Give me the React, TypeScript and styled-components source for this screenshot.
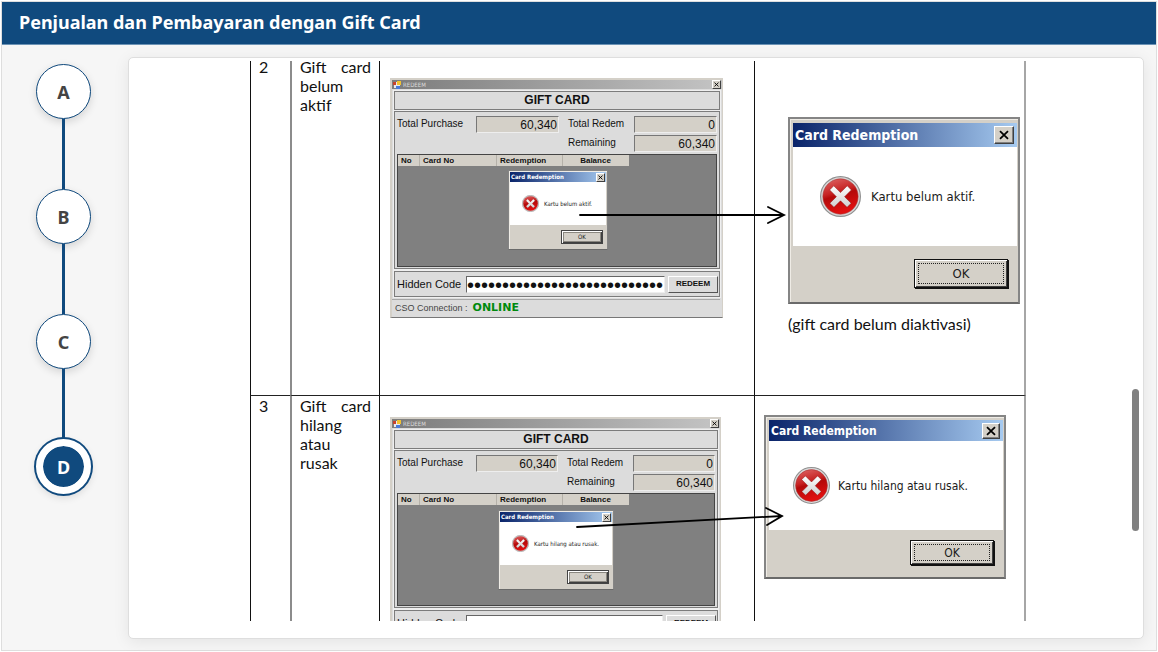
import React from "react";
import styled, { createGlobalStyle } from "styled-components";

const navy = "#104a7e";
const face = "#d4d0c8";
const uiFont = `"Liberation Sans", Arial, sans-serif`;
const dialogFont = `"DejaVu Sans Condensed", "DejaVu Sans", sans-serif`;

const GlobalStyle = createGlobalStyle`
  *, *::before, *::after { box-sizing: border-box; }
  body { margin: 0; background: #fff; font-family: "Noto Sans", "Open Sans", sans-serif; }
  button, input { font: inherit; color: inherit; margin: 0; }
`;

const Screen = styled.div`
  height: 100vh;
  padding: 1px;
  display: flex;
`;

const Frame = styled.div`
  flex: 1;
  min-width: 0;
  display: flex;
  flex-direction: column;
  border: 1px solid #dedede;
  background: #f6f6f6;
`;

const Header = styled.header`
  flex: none;
  height: 43px;
  padding: 0 17px 2px;
  display: flex;
  align-items: center;
  background: ${navy};
  border-bottom: 1px solid #6c93b5;
`;

const Title = styled.h1`
  margin: 0;
  font-size: 18px;
  line-height: 24px;
  font-weight: 700;
  color: #fff;
`;

const Body = styled.div`
  flex: 1;
  min-height: 0;
  display: flex;
  padding: 12px 12px 11px 34px;
`;

const Steps = styled.nav`
  flex: none;
  width: 92px;
  padding-top: 7px;
  display: flex;
  flex-direction: column;
  align-items: flex-start;
`;

const Step = styled.button<{ $active?: boolean }>`
  width: 55px;
  height: 55px;
  padding: 0;
  border-radius: 50%;
  border: ${(p) => (p.$active ? "7px solid #fff" : `1px solid ${navy}`)};
  background: ${(p) => (p.$active ? navy : "#fff")};
  background-clip: padding-box;
  color: ${(p) => (p.$active ? "#fff" : "#444")};
  font-size: 18px;
  line-height: 24px;
  font-weight: 700;
  box-shadow: ${(p) => (p.$active ? `0 0 0 2px ${navy}, ` : "")}0 3px 8px rgba(0, 0, 0, 0.14);
`;

const Connector = styled.span`
  width: 3px;
  height: 70px;
  margin-left: 26px;
  background: ${navy};
`;

const Panel = styled.main`
  flex: 1;
  min-width: 0;
  position: relative;
  padding: 3px 0 17px;
  display: flex;
  background: #fff;
  border: 1px solid #dedede;
  border-radius: 5px;
  box-shadow: 0 3px 16px rgba(0, 0, 0, 0.08);
`;

const Viewport = styled.div`
  flex: 1;
  min-width: 0;
  overflow: hidden;
  padding-left: 4px;
`;

const Thumb = styled.div`
  position: absolute;
  right: 4px;
  top: 57%;
  width: 7px;
  height: 142px;
  border-radius: 4px;
  background: #808080;
`;

const Sheet = styled.table`
  width: 776px;
  max-width: 100%;
  margin: -4px auto 0;
  table-layout: fixed;
  border-spacing: 0;
  color: #111;
  font-family: Lato, sans-serif;
  font-size: 16px;
  line-height: 19px;
`;

const SheetRow = styled.tr<{ $ruled?: boolean }>`
  height: 338px;
  & > td {
    border-top: ${(p) => (p.$ruled ? "1px solid #222" : "0")};
  }
`;

const Cell = styled.td<{ $pad: string; $soft?: boolean }>`
  position: relative;
  vertical-align: top;
  padding: ${(p) => p.$pad};
  border-left: ${(p) => (p.$soft ? "2px solid #8c8c8c" : "1px solid #111")};
  text-align: justify;
  &:last-child {
    border-right: 2px solid #a6a6a6;
    text-align: left;
  }
`;

const Arrow = styled.svg<{ $top: number }>`
  position: absolute;
  z-index: 2;
  left: 190px;
  top: ${(p) => p.$top}px;
  overflow: visible;
  fill: none;
  stroke: #000;
  stroke-width: 1.8;
  stroke-linecap: round;
`;

const Caption = styled.p`
  margin: 10px 0 0;
  white-space: nowrap;
`;

/* Message box, drawn at several sizes */
interface Metrics {
  width: number;
  edge: number;
  inset: number;
  title: number;
  body: number;
  foot: number;
  titleFont: number;
  font: number;
  icon: number;
  iconLeft: number;
  gap: number;
  close: number;
  button: [number, number];
  buttonRight: number;
}

const Box = styled.section<{ $m: Metrics }>`
  width: ${(p) => p.$m.width}px;
  padding: ${(p) => p.$m.inset}px 1px 0 ${(p) => (p.$m.edge > 1 ? 3 : 1)}px;
  border: ${(p) => p.$m.edge}px solid #858585;
  border-bottom-color: #6a6a6a;
  background: ${face};
  box-shadow: inset 1px 1px 0 #efece6;
  color: #1a1a1a;
  font-family: ${dialogFont};
  font-size: ${(p) => p.$m.font}px;
  line-height: 1;
`;

const BoxTitle = styled.header<{ $m: Metrics }>`
  height: ${(p) => p.$m.title}px;
  padding: 0 ${(p) => (p.$m.edge > 1 ? 3 : 1)}px 0 ${(p) => (p.$m.edge > 1 ? 2 : 1)}px;
  display: flex;
  align-items: center;
  justify-content: space-between;
  background: linear-gradient(90deg, #0a246a, #a6caf0);
  color: #fff;
  font-size: ${(p) => p.$m.titleFont}px;
  font-weight: 700;
  white-space: nowrap;
`;

const CloseButton = styled.button<{ $size: number }>`
  width: ${(p) => p.$size}px;
  height: ${(p) => p.$size - (p.$size > 10 ? 2 : 0)}px;
  padding: 0;
  display: grid;
  place-items: center;
  background: ${face};
  border: 1px solid;
  border-color: #fff #404040 #404040 #fff;
  box-shadow: ${(p) => (p.$size > 10 ? "inset -1px -1px 0 #808080" : "none")};
`;

const BoxBody = styled.div<{ $m: Metrics }>`
  height: ${(p) => p.$m.body}px;
  padding-left: ${(p) => p.$m.iconLeft}px;
  display: flex;
  align-items: center;
  gap: ${(p) => p.$m.gap}px;
  background: #fff;
  white-space: nowrap;
`;

const BoxFoot = styled.footer<{ $m: Metrics }>`
  height: ${(p) => p.$m.foot}px;
  padding-right: ${(p) => p.$m.buttonRight}px;
  padding-bottom: ${(p) => (p.$m.edge > 1 ? 2 : 1)}px;
  display: flex;
  align-items: center;
  justify-content: flex-end;
`;

const OkButton = styled.button<{ $m: Metrics }>`
  width: ${(p) => p.$m.button[0]}px;
  height: ${(p) => p.$m.button[1]}px;
  padding: ${(p) => (p.$m.edge > 1 ? 2 : 0)}px;
  display: grid;
  background: ${face};
  border: 1px solid ${(p) => (p.$m.edge > 1 ? "#111" : "#444")};
  box-shadow: inset 1px 1px 0 #fff, inset -1px -1px 0 #404040,
    ${(p) => (p.$m.edge > 1 ? "1px 1px 0 #111" : "0 0 0 #111")};
`;

const FocusRing = styled.span<{ $dotted: boolean }>`
  display: grid;
  place-items: center;
  margin: 1px;
  border: 1px ${(p) => (p.$dotted ? "dotted #222" : "solid #8a8780")};
`;

function Cross({ size }: { size: number }) {
  return (
    <svg width={size} height={size} viewBox="0 0 10 10" aria-hidden="true">
      <path d="M1 1.2 9 8.8M9 1.2 1 8.8" stroke="#000" strokeWidth="1.8" fill="none" />
    </svg>
  );
}

function ErrorIcon({ size }: { size: number }) {
  return (
    <svg width={size} height={size} viewBox="0 0 40 40" aria-hidden="true">
      <defs>
        <linearGradient id="errorRed" x1="0" y1="0" x2="0.3" y2="1">
          <stop offset="0" stopColor="#e06a6a" />
          <stop offset="0.45" stopColor="#c62222" />
          <stop offset="0.55" stopColor="#b40a0a" />
          <stop offset="1" stopColor="#e01010" />
        </linearGradient>
        <linearGradient id="crossGrey" x1="0" y1="0" x2="0" y2="1">
          <stop offset="0" stopColor="#fff" />
          <stop offset="1" stopColor="#cfcfcf" />
        </linearGradient>
      </defs>
      <circle cx="20" cy="20" r="19.4" fill="#d9d9d9" stroke="#909090" strokeWidth="1.2" />
      <circle cx="20" cy="20" r="17.2" fill="url(#errorRed)" stroke="#a33" strokeWidth="0.6" />
      <path
        d="M13.4 9.6 20 16.2l6.6-6.6 4 4L24 20.2l6.4 6.4-4 4L20 24.2l-6.4 6.4-4-4 6.4-6.4-6.6-6.6z"
        fill="url(#crossGrey)"
        stroke="#8e1414"
        strokeWidth="0.5"
      />
    </svg>
  );
}

function MessageBox({ m, text }: { m: Metrics; text: string }) {
  const large = m.edge > 1;
  return (
    <Box $m={m} aria-label="Card Redemption">
      <BoxTitle $m={m}>
        Card Redemption
        <CloseButton type="button" aria-label="Close" $size={m.close}>
          <Cross size={large ? 10 : 5} />
        </CloseButton>
      </BoxTitle>
      <BoxBody $m={m}>
        <ErrorIcon size={m.icon} />
        {text}
      </BoxBody>
      <BoxFoot $m={m}>
        <OkButton type="button" $m={m}>
          <FocusRing $dotted={large}>OK</FocusRing>
        </OkButton>
      </BoxFoot>
    </Box>
  );
}

const inactiveLarge: Metrics = {
  width: 232, edge: 2, inset: 4, title: 24, body: 99, foot: 56, titleFont: 14, font: 13,
  icon: 41, iconLeft: 27, gap: 10, close: 20, button: [94, 29], buttonRight: 9,
};
const lostLarge: Metrics = {
  width: 242, edge: 2, inset: 3, title: 21, body: 89, foot: 47, titleFont: 12, font: 12,
  icon: 37, iconLeft: 24, gap: 8, close: 18, button: [84, 25], buttonRight: 9,
};
const inactiveSmall: Metrics = {
  width: 100, edge: 1, inset: 1, title: 10, body: 43, foot: 24, titleFont: 6, font: 6,
  icon: 17, iconLeft: 12, gap: 5, close: 9, button: [42, 14], buttonRight: 3,
};
const lostSmall: Metrics = { ...inactiveSmall, width: 116 };

/* Redeem window */
const Window = styled.figure<{ $width: number }>`
  position: relative;
  width: ${(p) => p.$width}px;
  height: 240px;
  margin: 0;
  padding: 0 2px;
  border: 2px solid ${face};
  border-right-width: 1px;
  border-bottom: 1px solid #777;
  display: flex;
  flex-direction: column;
  gap: 2px;
  background: #dcdcdc;
  color: #111;
  font-family: ${uiFont};
  font-size: 10px;
  line-height: 12px;
`;

const WindowTitle = styled.figcaption`
  height: 9px;
  margin: 0 -2px;
  padding: 0 1px;
  display: flex;
  align-items: center;
  gap: 2px;
  background: linear-gradient(90deg, #7c7c7c, #c4c4c4);
  color: #dcdcdc;
  font-family: ${dialogFont};
  font-size: 6px;
  line-height: 8px;
  & > button {
    margin-left: auto;
  }
`;

const Group = styled.div`
  border: 1px solid #7c7c7c;
  box-shadow: 0 0 0 1px #efefef;
`;

const Heading = styled(Group)`
  height: 19px;
  display: grid;
  place-items: center;
  font-size: 12px;
  font-weight: 700;
`;

const Totals = styled(Group)`
  height: 159px;
  margin-top: -1px;
  padding: 4px 2px 0;
`;

const Fields = styled.div`
  display: grid;
  grid-template-columns: 79fr 83fr 75fr 83fr;
  grid-auto-rows: 17px;
  row-gap: 2px;
  align-items: center;
`;

const FieldLabel = styled.label<{ $second?: boolean; $third?: boolean }>`
  grid-column: ${(p) => (p.$third ? 3 : "auto")};
  padding-left: ${(p) => (p.$second ? 9 : 0)}px;
  white-space: nowrap;
`;

const Amount = styled.input`
  width: 100%;
  min-width: 0;
  height: 17px;
  padding: 1px 1px 0;
  border: 1px solid;
  border-color: #777 #eee #eee #777;
  border-radius: 0;
  background: ${face};
  font-size: 12px;
  line-height: 14px;
  text-align: right;
`;

const GridArea = styled.div`
  height: 113px;
  margin-top: 2px;
  border: 1px solid #444;
  background: #808080;
`;

const CardGrid = styled.table`
  width: 231px;
  table-layout: fixed;
  border-spacing: 0;
  background: ${face};
  font-size: 8px;
  line-height: 10px;
  th {
    height: 11px;
    padding: 1px 4px 0 3px;
    text-align: left;
    border-right: 1px solid #b5b1a9;
  }
  th:last-child {
    text-align: center;
    border-right: 0;
  }
`;

const CodeRow = styled(Group)`
  height: 26px;
  padding: 0 1px 0 2px;
  display: flex;
  align-items: center;
`;

const CodeLabel = styled.label`
  flex: none;
  width: 69px;
  font-size: 11px;
`;

const CodeInput = styled.input`
  flex: 1;
  min-width: 0;
  height: 17px;
  padding: 2px 0 0;
  border: 1px solid;
  border-color: #666 #eee #eee #666;
  border-radius: 0;
  background: #fff;
  font-family: ${uiFont};
  font-size: 20px;
  line-height: 14px;
`;

const RedeemButton = styled.button`
  flex: none;
  width: 50px;
  height: 17px;
  margin-left: 3px;
  padding: 0;
  border: 1px solid;
  border-color: #fff #555 #555 #fff;
  background: #dcdcdc;
  font-size: 8px;
  line-height: 10px;
  font-weight: 700;
`;

const Status = styled.div`
  height: 18px;
  margin-left: -2px;
  padding: 0 0 2px 3px;
  display: flex;
  align-items: center;
  border-top: 1px solid #a8a8a8;
  color: #444;
  font-size: 9px;
  & > strong {
    margin-left: 5px;
    color: #008a0e;
    font-family: "DejaVu Sans", sans-serif;
    font-size: 11px;
  }
`;

const Popup = styled.div<{ $left: number; $top: number }>`
  position: absolute;
  left: ${(p) => p.$left}px;
  top: ${(p) => p.$top}px;
`;

function FormIcon() {
  return (
    <svg width="8" height="8" viewBox="0 0 8 8" aria-hidden="true">
      <rect x="1" y="1" width="6" height="6" fill="#e9e9ee" />
      <rect x="0" y="1" width="3" height="3" fill="#c8422c" />
      <rect x="4" y="0" width="4" height="4" fill="#f2c230" />
      <rect x="3" y="5" width="4" height="3" fill="#4a7bd8" />
    </svg>
  );
}

interface RedeemWindowProps {
  id: string;
  width: number;
  popupLeft: number;
  popupTop: number;
  m: Metrics;
  text: string;
}

function RedeemWindow({ id, width, popupLeft, popupTop, m, text }: RedeemWindowProps) {
  return (
    <Window $width={width}>
      <WindowTitle>
        <FormIcon />
        REDEEM
        <CloseButton type="button" aria-label="Close" $size={9}>
          <Cross size={5} />
        </CloseButton>
      </WindowTitle>
      <Heading>GIFT CARD</Heading>
      <Totals>
        <Fields>
          <FieldLabel htmlFor={`${id}-purchase`}>Total Purchase</FieldLabel>
          <Amount id={`${id}-purchase`} value="60,340" readOnly />
          <FieldLabel $second htmlFor={`${id}-redeem`}>Total Redem</FieldLabel>
          <Amount id={`${id}-redeem`} value="0" readOnly />
          <FieldLabel $second $third htmlFor={`${id}-remaining`}>Remaining</FieldLabel>
          <Amount id={`${id}-remaining`} value="60,340" readOnly />
        </Fields>
        <GridArea>
          <CardGrid>
            <colgroup>
              <col width="22" />
              <col width="77" />
              <col width="66" />
              <col width="66" />
            </colgroup>
            <thead>
              <tr>
                <th>No</th>
                <th>Card No</th>
                <th>Redemption</th>
                <th>Balance</th>
              </tr>
            </thead>
          </CardGrid>
        </GridArea>
      </Totals>
      <CodeRow>
        <CodeLabel htmlFor={`${id}-code`}>Hidden Code</CodeLabel>
        <CodeInput id={`${id}-code`} type="password" value={"0".repeat(28)} readOnly />
        <RedeemButton type="button">REDEEM</RedeemButton>
      </CodeRow>
      <Status>
        CSO Connection :<strong>ONLINE</strong>
      </Status>
      <Popup $left={popupLeft} $top={popupTop}>
        <MessageBox m={m} text={text} />
      </Popup>
    </Window>
  );
}

const steps = ["A", "B", "C", "D"];

export default function App() {
  return (
    <Screen>
      <GlobalStyle />
      <Frame>
        <Header>
          <Title>Penjualan dan Pembayaran dengan Gift Card</Title>
        </Header>
        <Body>
          <Steps>
            {steps.map((s, i) => (
              <React.Fragment key={s}>
                {i > 0 && <Connector />}
                <Step type="button" $active={s === "D"}>{s}</Step>
              </React.Fragment>
            ))}
          </Steps>
          <Panel>
            <Viewport>
              <Sheet>
                <colgroup>
                  <col width="40" />
                  <col width="89" />
                  <col width="375" />
                  <col width="272" />
                </colgroup>
                <tbody>
                  <SheetRow>
                    <Cell $pad="0 8px">2</Cell>
                    <Cell $soft $pad="0 8px">Gift card belum aktif</Cell>
                    <Cell $pad="21px 0 0 10px">
                      <RedeemWindow id="inactive" width={333} popupLeft={116} popupTop={90} m={inactiveSmall} text="Kartu belum aktif." />
                      <Arrow $top={149} width="216" height="18">
                        <path d="M10 9H214M198 1l16 8-16 8" />
                      </Arrow>
                    </Cell>
                    <Cell $pad="60px 0 0 33px">
                      <MessageBox m={inactiveLarge} text="Kartu belum aktif." />
                      <Caption>(gift card belum diaktivasi)</Caption>
                    </Cell>
                  </SheetRow>
                  <SheetRow $ruled>
                    <Cell $pad="0 8px">3</Cell>
                    <Cell $soft $pad="0 8px">Gift card hilang atau rusak</Cell>
                    <Cell $pad="21px 0 0 10px">
                      <RedeemWindow id="lost" width={331} popupLeft={106} popupTop={91} m={lostSmall} text="Kartu hilang atau rusak." />
                      <Arrow $top={112} width="216" height="20">
                        <path d="M7 19 212 8M196 0l16 8-15 9" />
                      </Arrow>
                    </Cell>
                    <Cell $pad="19px 0 0 9px">
                      <MessageBox m={lostLarge} text="Kartu hilang atau rusak." />
                    </Cell>
                  </SheetRow>
                </tbody>
              </Sheet>
            </Viewport>
            <Thumb />
          </Panel>
        </Body>
      </Frame>
    </Screen>
  );
}
